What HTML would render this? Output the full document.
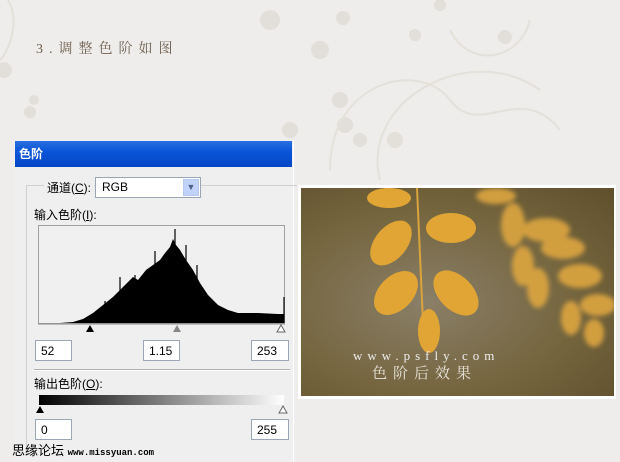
<!DOCTYPE html>
<html><head><meta charset="utf-8"><style>
body{margin:0;width:620px;height:462px;overflow:hidden;background:#eeedeb;position:relative;font-family:"Liberation Sans","Noto Sans CJK SC",sans-serif}
.a{position:absolute}
.inp{position:absolute;background:#fff;border:1px solid #9aa6b4;height:21px;font-size:12px;line-height:20px;padding-left:5px;box-sizing:border-box;color:#000}
.lbl{font-size:12px;color:#000}
</style></head><body>
<svg class="a" style="left:0;top:0" width="620" height="462">
<g fill="#e0dbd5" opacity="0.8">
<circle cx="4" cy="70" r="8"/><circle cx="30" cy="112" r="6"/><circle cx="34" cy="100" r="5"/>
<circle cx="270" cy="20" r="10"/><circle cx="320" cy="50" r="9"/><circle cx="343" cy="18" r="7"/>
<circle cx="340" cy="100" r="8"/><circle cx="345" cy="125" r="8"/><circle cx="360" cy="140" r="7"/>
<circle cx="415" cy="35" r="6"/><circle cx="505" cy="37" r="7"/><circle cx="440" cy="5" r="6"/>
<circle cx="395" cy="140" r="8"/><circle cx="290" cy="130" r="8"/>
</g>
<g fill="none" stroke="#e4e0da" stroke-width="2">
<path d="M330 170 C 330 80, 420 60, 450 100 C 480 140, 520 80, 560 130"/>
<path d="M380 180 C 360 100, 470 40, 540 90"/>
<path d="M450 30 C 470 70, 520 60, 530 20"/>
<path d="M8 0 C 20 20, 10 50, 0 60"/>
</g>
</svg>
<div class="a" style="left:36px;top:38px;font-size:14px;letter-spacing:6px;color:#6f6050;font-family:'Liberation Serif','Noto Serif CJK SC',serif">3.调整色阶如图</div>

<div class="a" style="left:14px;top:140px;width:279px;height:322px;background:#efefef;border-right:1px solid #fff"></div>
<div class="a" style="left:15px;top:141px;width:277px;height:26px;background:linear-gradient(#2a6fe0,#0a55d8 40%,#0547c6);color:#fff;font-size:12px;font-weight:bold;line-height:26px;padding-left:4px;box-sizing:border-box">色阶</div>
<div class="a" style="left:26px;top:185px;width:270px;height:270px;border-left:1px solid #d0d0d0;border-top:1px solid #d0d0d0"></div>
<div class="a" style="left:44px;top:179px;background:#efefef;padding:0 3px" ><span class="lbl">通道(<u>C</u>):</span></div>
<div class="a" style="left:95px;top:177px;width:106px;height:21px;background:#fff;border:1px solid #9aa6b4;box-sizing:border-box;font-size:12px;line-height:19px;padding-left:6px">RGB
<div class="a" style="right:1px;top:1px;width:16px;height:17px;background:#c1d3fb;border:1px solid #b8c9ef;box-sizing:border-box;font-size:9px;line-height:15px;text-align:center;color:#4d6185">▼</div></div>
<div class="a lbl" style="left:34px;top:206px">输入色阶(<u>I</u>):</div>
<svg class="a" style="left:38px;top:225px" width="248" height="115">
<rect x="0.5" y="0.5" width="246" height="98" fill="#f0f0f0" stroke="#a0a0a0"/>
<path d="M22 98 L35 97 L45 94 L55 88 L65 80 L75 72 L85 62 L95 52 L100 55 L108 45 L115 40 L122 35 L127 28 L132 22 L135 14 L138 20 L142 25 L148 35 L155 45 L162 58 L170 70 L180 80 L190 85 L200 88 L220 88 L240 89 L246 89 L246 98 Z" fill="#000"/>
<path d="M82 52 V98 M97 50 V98 M117 26 V98 M137 4 V98 M148 20 V98 M159 40 V98 M67 76 V98 M246 72 V98" stroke="#000" stroke-width="1.2"/>
<line x1="0" y1="99" x2="247" y2="99" stroke="#888"/>
<path d="M52 100 l-4 7 h8 z" fill="#000"/>
<path d="M139 100 l-4 7 h8 z" fill="#888"/>
<path d="M243 100 l-4 7 h8 z" fill="#fff" stroke="#666"/>
</svg>
<div class="inp" style="left:35px;top:340px;width:37px">52</div>
<div class="inp" style="left:143px;top:340px;width:37px">1.15</div>
<div class="inp" style="left:251px;top:340px;width:38px">253</div>
<div class="a" style="left:34px;top:369px;width:256px;height:1px;background:#b0b0b0;border-bottom:1px solid #fff"></div>
<div class="a lbl" style="left:34px;top:375px">输出色阶(<u>O</u>):</div>
<div class="a" style="left:39px;top:395px;width:245px;height:10px;background:linear-gradient(90deg,#000,#fff)"></div>
<svg class="a" style="left:34px;top:405px" width="256" height="10"><path d="M6 1 l-4 7 h8 z" fill="#000"/><path d="M249 1 l-4 7 h8 z" fill="#fff" stroke="#666"/></svg>
<div class="inp" style="left:35px;top:419px;width:37px">0</div>
<div class="inp" style="left:251px;top:419px;width:38px">255</div>
<div class="a" style="left:12px;top:440px;font-size:13px;color:#000">思缘论坛 <span style="font-size:9px;font-family:'Liberation Mono',monospace;font-weight:bold">www.missyuan.com</span></div>

<div class="a" style="left:298px;top:185px;width:318px;height:214px;background:#fff"></div>
<div class="a" style="left:301px;top:188px;width:313px;height:208px;overflow:hidden;background:radial-gradient(ellipse at 40% 55%,#8a7f68,#75663f 55%,#5f4f2c);">
<svg width="313" height="208">
<defs><filter id="b"><feGaussianBlur stdDeviation="2.5"/></filter></defs>
<g fill="#e0a535"><line x1="116" y1="0" x2="122" y2="135" stroke="#d9a43c" stroke-width="2"/>
<ellipse cx="88" cy="10" rx="22" ry="10"/><ellipse cx="150" cy="40" rx="25" ry="15"/>
<ellipse cx="90" cy="55" rx="16" ry="26" transform="rotate(40 90 55)"/>
<ellipse cx="95" cy="105" rx="17" ry="26" transform="rotate(45 95 105)"/>
<ellipse cx="155" cy="105" rx="17" ry="27" transform="rotate(-45 155 105)"/>
<ellipse cx="128" cy="143" rx="11" ry="22"/></g>
<g fill="#dda640" filter="url(#b)" opacity="0.9"><ellipse cx="212" cy="37" rx="12" ry="22"/><ellipse cx="245" cy="42" rx="24" ry="12"/>
<ellipse cx="222" cy="78" rx="11" ry="20"/><ellipse cx="262" cy="60" rx="22" ry="11"/>
<ellipse cx="237" cy="100" rx="11" ry="20"/><ellipse cx="279" cy="88" rx="22" ry="12"/>
<ellipse cx="270" cy="130" rx="10" ry="17"/><ellipse cx="297" cy="117" rx="18" ry="11"/><ellipse cx="293" cy="145" rx="10" ry="14"/>
<ellipse cx="195" cy="8" rx="20" ry="8"/></g>
<text x="52" y="172" fill="#eee" font-size="13" font-family="Liberation Serif,serif" letter-spacing="5">www.psfly.com</text>
<text x="71" y="190" fill="#e8e4dc" font-size="15" font-family="Noto Serif CJK SC,serif" letter-spacing="6">色阶后效果</text>
</svg></div>
</body></html>
